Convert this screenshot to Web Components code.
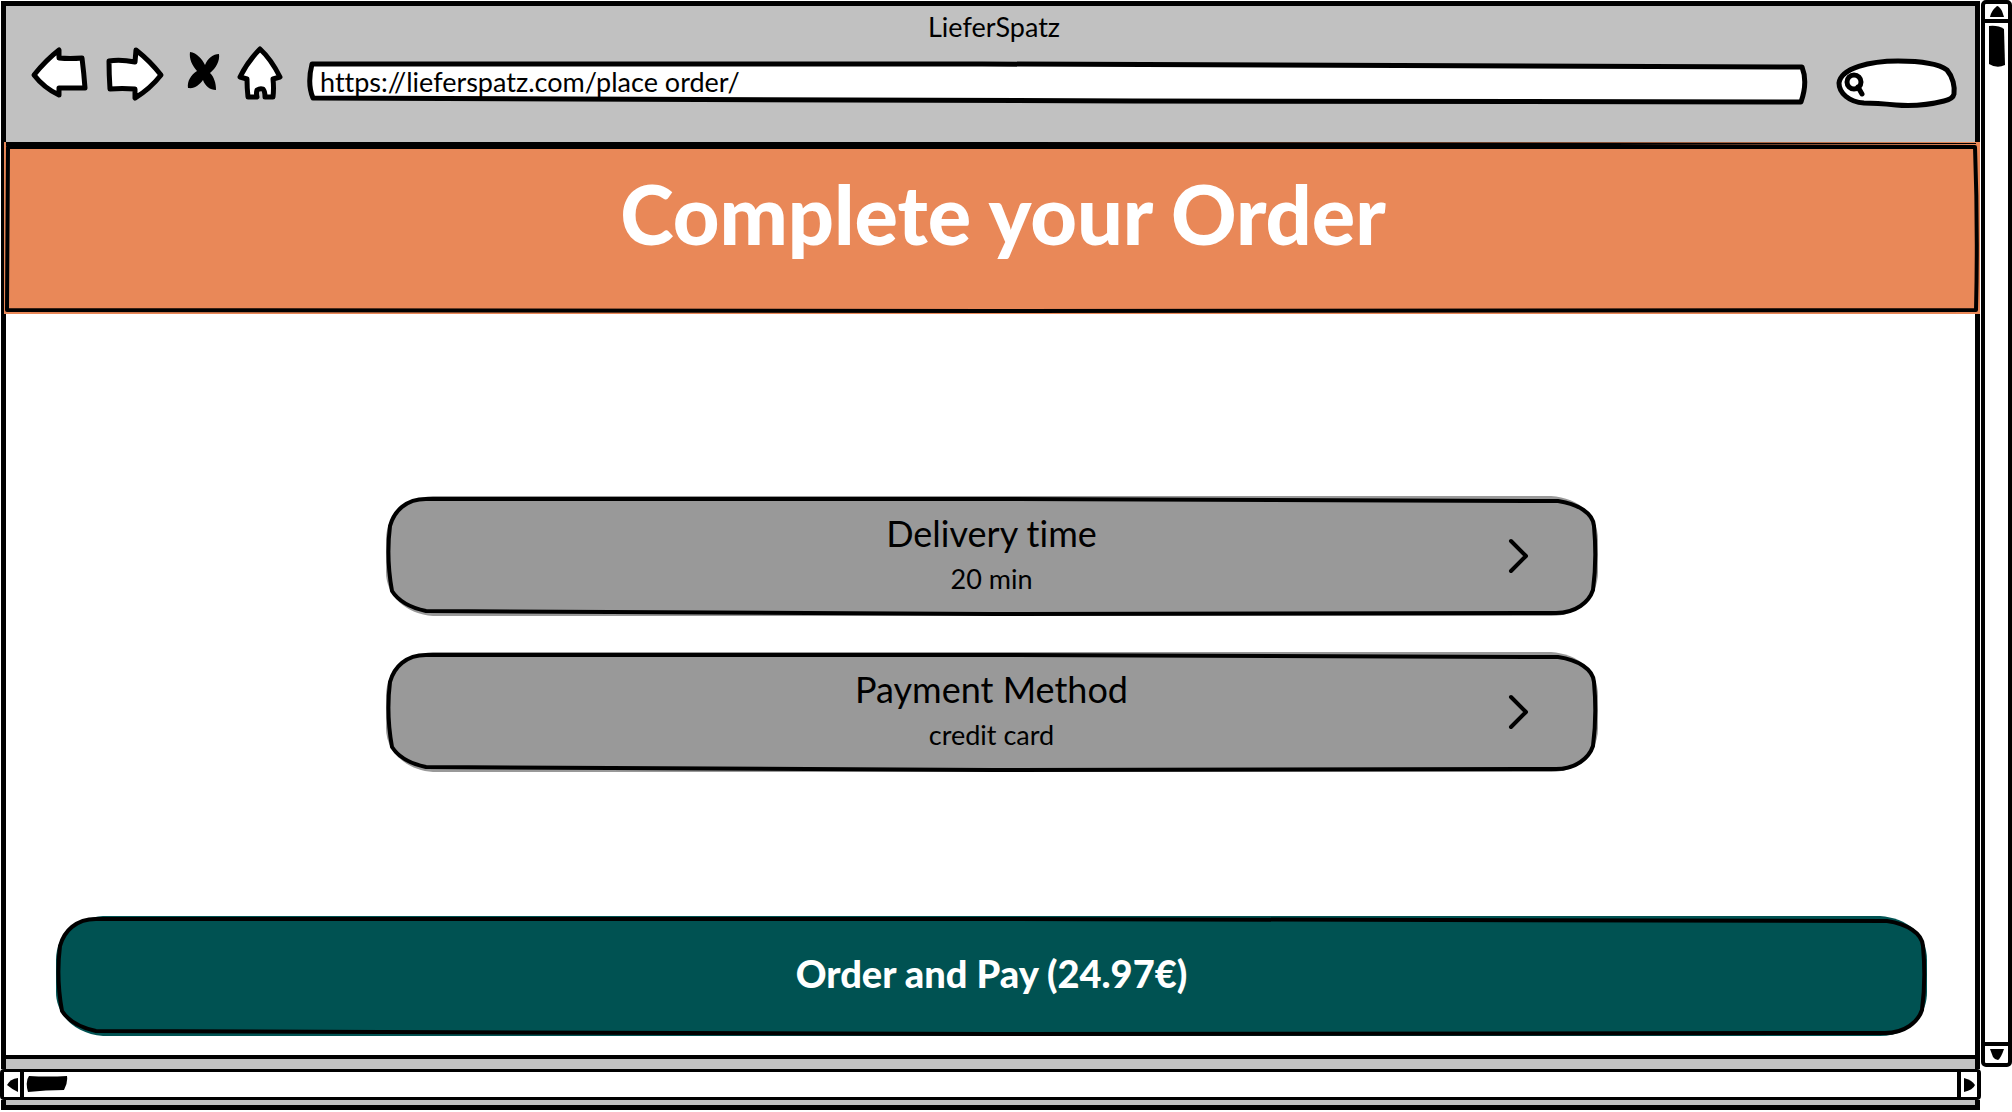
<!DOCTYPE html>
<html lang="en">
<head>
<meta charset="utf-8">
<meta name="viewport" content="width=device-width, initial-scale=1">
<title>LieferSpatz</title>
<style>
  body { margin: 0; background: #fff; color: #000; font-family: Lato, "Open Sans", sans-serif; font-variant-ligatures: none; }
</style>
</head>
<body>
<order-screen></order-screen>

<script>
/* Hand-drawn outlines, computed for the current size of the box. */
const outlines = {
  pill: (w, h) => ({
    fill: `M47 0H${w - 47}C${w - 20} 2 ${w} 18 ${w} 44V${h - 44}C${w} ${h - 18} ${w - 20} ${h} ${w - 47} ${h}H47C20 ${h - 2} 0 ${h - 20} 0 ${h - 44}V44C0 18 20 2 47 0Z`,
    line: `M40 3H${w * .5}L${w - 40} 5C${w - 20} 8 ${w - 5} 17 ${w - 4} 30Q${w - 1} 64 ${w - 5} ${h - 26}C${w - 9} ${h - 14} ${w - 22} ${h - 3} ${w - 42} ${h - 3}L${w * .5} ${h - 2}L40 ${h - 5}C26 ${h - 8} 13 ${h - 14} 6 ${h - 25}Q0 62 4 30C8 15 20 3 40 3Z`
  }),
  banner: (w, h) => ({
    fill: `M0 0H${w}V${h}H0Z`,
    line: `M4 5L${w * .5} 5L${w - 5} 5Q${w - 2} ${h * .5} ${w - 4} ${h - 4}L${w * .5} ${h - 3}L3 ${h - 4}Z`,
    extra: `M2 0H${w * .5}L${w - 4} 1V2L${w * .6} 4H2Z`
  }),
  address: (w, h) => {
    const d = `M6 4H${w * .45}L${w - 7} 7Q${w - 1} 22 ${w - 8} ${h - 4}L${w * .55} ${h - 5}L7 ${h - 8}Q1 24 6 4Z`;
    return { fill: d, line: d, wide: true };
  },
  search: (w, h) => {
    const d = 'M28 45C13 44 3 35 3 25C5 10 34 3 62 3C86 3 103 6 111 12C117 19 119 29 118 36Q117 41 108 43Q84 49 60 47Q40 45 28 45Z';
    return { fill: d, line: d, wide: true };
  }
};

class SketchFrame extends HTMLElement {
  constructor() {
    super();
    this.attachShadow({ mode: 'open' }).innerHTML = `
      <style>
        :host { display: grid; position: relative; isolation: isolate; }
        svg { position: absolute; inset: 0; width: 100%; height: 100%; z-index: -1; overflow: visible; }
        .fill { fill: var(--fill, #fff); }
        .line { fill: none; stroke: #000; stroke-width: 4; stroke-linejoin: round; }
        .line.wide { stroke-width: 5; }
        .extra { fill: #000; }
      </style>
      <svg aria-hidden="true"><path class="fill"/><path class="extra"/><path class="line"/></svg>
      <slot></slot>`;
    this.observer = new ResizeObserver(() => this.draw());
  }
  connectedCallback() { this.observer.observe(this); this.draw(); }
  disconnectedCallback() { this.observer.disconnect(); }
  draw() {
    const w = this.offsetWidth, h = this.offsetHeight;
    if (!w || !h) return;
    const o = outlines[this.getAttribute('shape') || 'pill'](w, h);
    const find = s => this.shadowRoot.querySelector(s);
    find('.fill').setAttribute('d', o.fill);
    find('.line').setAttribute('d', o.line);
    find('.line').classList.toggle('wide', !!o.wide);
    find('.extra').setAttribute('d', o.extra || '');
  }
}
customElements.define('sketch-frame', SketchFrame);

class BrowserToolbar extends HTMLElement {
  constructor() {
    super();
    this.attachShadow({ mode: 'open' }).innerHTML = `
      <style>
        :host { display: block; box-sizing: border-box; height: 136px; background: #c1c1c1; padding: 4px 17px 0 24px; }
        .title { font-size: 27px; line-height: 34px; text-align: center; margin-bottom: 2px; }
        nav { display: flex; align-items: flex-start; gap: 16px; }
        button { border: 0; padding: 0; background: none; height: 56px; flex: none; }
        svg { display: block; overflow: visible; fill: #fff; stroke: #000; stroke-width: 5; stroke-linejoin: round; stroke-linecap: round; }
        .address { flex: 1; min-width: 0; height: 46px; margin: 14px 11px 0 6px; }
        .search { flex: none; width: 122px; height: 50px; margin-top: 12px; }
        input { border: 0; outline: 0; background: none; min-width: 0; width: 100%; box-sizing: border-box; font: inherit; color: inherit; font-size: 27px; padding: 0 14px 4px; }
        .search label { display: flex; align-items: center; padding: 4px 0 0 10px; }
        .search input { padding: 0 10px; height: 32px; }
      </style>
      <div class="title"><slot></slot></div>
      <nav aria-label="Browser">
        <button aria-label="Back"><svg width="58" height="56"><path d="M29 4V12Q40 13 52 12Q54 28 55 42L29 42V49Q14 42 4 29Q16 14 29 4Z"/></svg></button>
        <button aria-label="Forward"><svg width="60" height="56"><path d="M32 4Q46 15 57 29Q46 43 31 52V43Q18 42 6 43Q5 28 5 15Q16 13 31 16Z"/></svg></button>
        <button aria-label="Stop"><svg width="40" height="56"><path style="stroke:none;fill:#000" d="M10 6C17 7 22 13 25 19C28 12 33 8 39 8C40 15 36 22 30 27C34 31 36 37 36 44C30 44 25 40 23 34C19 39 15 43 8 42C7 35 11 29 17 25C12 19 9 13 10 6Z"/></svg></button>
        <button aria-label="Home"><svg width="48" height="56"><path d="M24 3Q35 13 44 31L37 33Q38 42 37 51H29Q29 45 27 43Q24 42 21 44Q20 47 21 51H12Q11 42 11 33L4 31Q12 15 24 3Z"/></svg></button>
        <sketch-frame class="address" shape="address"><input type="text" aria-label="Address" value="https://lieferspatz.com/place order/"></sketch-frame>
        <sketch-frame class="search" shape="search">
          <label><svg width="20" height="26" aria-hidden="true"><circle cx="8" cy="10" r="7"/><path d="M12 15L16 22"/></svg><input type="text" aria-label="Search"></label>
        </sketch-frame>
      </nav>`;
  }
}
customElements.define('browser-toolbar', BrowserToolbar);

class SketchScrollbar extends HTMLElement {
  constructor() {
    super();
    const v = this.getAttribute('direction') === 'vertical';
    this.attachShadow({ mode: 'open' }).innerHTML = `
      <style>
        :host { display: flex; box-sizing: border-box; background: #fff; border: 4px solid #000; }
        :host([direction="vertical"]) { flex-direction: column; border-radius: 5px; }
        :host([direction="horizontal"]) { border-width: 3px 4px; border-radius: 4px; }
        button { flex: none; border: 0 solid #000; background: none; padding: 0; display: grid; place-items: center; }
        .v { width: 100%; height: 19px; }
        .v.start { border-bottom-width: 4px; }
        .v.end { border-top-width: 4px; height: 21px; }
        .h { height: 100%; width: 20px; }
        .h.start { border-right-width: 4px; }
        .h.end { border-left-width: 4px; }
        .track { flex: 1; display: flex; padding: 2px; }
        svg { display: block; }
      </style>
      ${v ? `
      <button class="v start" aria-label="Scroll up"><svg width="14" height="11"><path d="M7 0Q9 0 12 5L14 11H0Q1 5 7 0Z"/></svg></button>
      <div class="track"><svg width="20" height="44"><path d="M2 1Q11 0 17 4L18 40Q10 44 2 39Z"/></svg></div>
      <button class="v end" aria-label="Scroll down"><svg width="14" height="11"><path d="M0 0H14Q11 9 8 11Q5 11 3 8Z"/></svg></button>` : `
      <button class="h start" aria-label="Scroll left"><svg width="11" height="14"><path d="M11 0V14Q6 12 0 7Q3 1 11 0Z"/></svg></button>
      <div class="track"><svg width="44" height="20"><path d="M3 2Q22 3 41 2Q42 9 38 16Q20 16 2 18Q-1 7 3 2Z"/></svg></div>
      <button class="h end" aria-label="Scroll right"><svg width="11" height="14"><path d="M0 0Q8 2 11 7Q9 12 0 14Z"/></svg></button>`}`;
  }
}
customElements.define('sketch-scrollbar', SketchScrollbar);

class PageBanner extends HTMLElement {
  constructor() {
    super();
    this.attachShadow({ mode: 'open' }).innerHTML = `
      <style>
        :host { display: block; position: relative; margin: 0 -5px 0 -2px; }
        sketch-frame { --fill: #e98858; height: 172px; }
        h1 { margin: 0; padding: 24px 0 0 22px; text-align: center; color: #fff; font-size: 81px; line-height: 96px; font-weight: 900; }
      </style>
      <sketch-frame shape="banner"><h1><slot></slot></h1></sketch-frame>`;
  }
}
customElements.define('page-banner', PageBanner);

class OrderOption extends HTMLElement {
  constructor() {
    super();
    this.attachShadow({ mode: 'open' }).innerHTML = `
      <style>
        :host { display: block; }
        sketch-frame { --fill: #999; }
        button { display: grid; grid-template-columns: 1fr auto 1fr; align-items: center; min-height: 120px; width: 100%; border: 0; background: none; color: #000; font: inherit; font-variant-ligatures: none; padding: 0 68px; }
        .text { grid-column: 2; display: grid; gap: 8px; justify-items: center; padding-bottom: 6px; }
        .label { font-size: 36px; line-height: 44px; }
        .value { font-size: 27px; line-height: 32px; }
        svg { grid-column: 3; justify-self: end; fill: none; stroke: #000; stroke-width: 4; stroke-linecap: round; stroke-linejoin: round; }
      </style>
      <sketch-frame><button>
        <span class="text"><span class="label"><slot></slot></span><span class="value"><slot name="value"></slot></span></span>
        <svg width="22" height="36" aria-hidden="true"><path d="M3 3L18 18L3 33"/></svg>
      </button></sketch-frame>`;
  }
}
customElements.define('order-option', OrderOption);

class PayButton extends HTMLElement {
  constructor() {
    super();
    this.attachShadow({ mode: 'open' }).innerHTML = `
      <style>
        :host { display: block; }
        sketch-frame { --fill: #005252; }
        button { min-height: 120px; width: 100%; border: 0; background: none; color: #fff; font: inherit; font-size: 38px; font-weight: 900; line-height: 44px; padding: 0 48px 6px; }
      </style>
      <sketch-frame><button><slot></slot></button></sketch-frame>`;
  }
}
customElements.define('pay-button', PayButton);

class OrderScreen extends HTMLElement {
  constructor() {
    super();
    this.attachShadow({ mode: 'open' }).innerHTML = `
      <style>
        :host { display: flex; align-items: flex-start; box-sizing: border-box; min-height: 100vh; }
        .window { flex: 1; min-width: 0; min-height: 100vh; box-sizing: border-box; display: flex; flex-direction: column; padding: 1px 0 2px; }
        .view { flex: 1; display: flex; flex-direction: column; margin: 0 1px; border: 5px solid #000; border-bottom-width: 4px; }
        main { flex: 1; display: flex; flex-direction: column; align-items: center; padding: 182px 48px 19px 50px; }
        .options { width: 100%; max-width: 1212px; display: grid; gap: 36px; }
        pay-button { width: 100%; margin-top: auto; }
        .strip { margin: 0 1px; height: 10px; background: #c1c1c1; border: 0 solid #000; border-width: 0 5px; }
        .strip.last { height: 5px; border-bottom-width: 5px; }
        sketch-scrollbar[direction="horizontal"] { height: 31px; }
        .side { flex: none; width: 31px; height: calc(100vh - 45px); }
      </style>
      <div class="window">
        <div class="view">
          <browser-toolbar>LieferSpatz</browser-toolbar>
          <page-banner>Complete your Order</page-banner>
          <main>
            <div class="options">
              <order-option>Delivery time<span slot="value">20 min</span></order-option>
              <order-option>Payment Method<span slot="value">credit card</span></order-option>
            </div>
            <pay-button>Order and Pay (24.97€)</pay-button>
          </main>
        </div>
        <div class="strip"></div>
        <sketch-scrollbar direction="horizontal"></sketch-scrollbar>
        <div class="strip last"></div>
      </div>
      <sketch-scrollbar class="side" direction="vertical"></sketch-scrollbar>`;
  }
}
customElements.define('order-screen', OrderScreen);
</script>
</body>
</html>
